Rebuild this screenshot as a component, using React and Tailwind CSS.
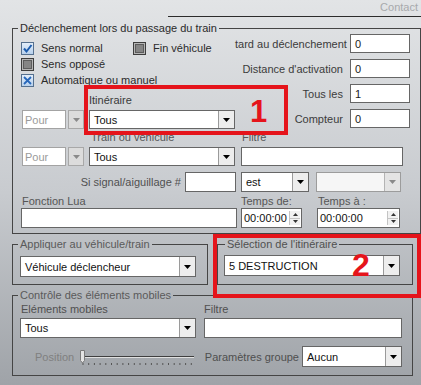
import { useState } from 'react';

function Tri({ color = '#000' }) {
  return (
    <svg width="7" height="4" viewBox="0 0 7 4">
      <polygon points="0,0 7,0 3.5,4" fill={color} />
    </svg>
  );
}

function Checkbox({ state }) {
  if (state === 'off') {
    return (
      <span className="flex h-[13px] w-[13px] shrink-0 items-center justify-center border border-[#3d3d3d] bg-[#b5b5b5]">
        <span className="h-[9px] w-[9px] border border-[#5c5c5c] bg-[#858585]" />
      </span>
    );
  }
  return (
    <span className="flex h-[13px] w-[13px] shrink-0 items-center justify-center border border-[#55708f] bg-gradient-to-b from-[#e3eefa] to-[#b7d0ec]">
      <svg width="11" height="11" viewBox="0 0 11 11">
        {state === 'check' ? (
          <path d="M2 5.5 L4.5 8.5 L9.5 2" fill="none" stroke="#1d5cad" strokeWidth="2" />
        ) : (
          <path d="M2 2 L9 9 M9 2 L2 9" fill="none" stroke="#2767bb" strokeWidth="1.8" />
        )}
      </svg>
    </span>
  );
}

function CheckItem({ state, label }) {
  return (
    <span className="flex items-center gap-[7px]">
      <Checkbox state={state} />
      <span className="text-[#2b2b2b]">{label}</span>
    </span>
  );
}

function Field({ value, className }) {
  return (
    <div className={`flex items-center border border-[#666] bg-white pl-[4px] text-[#1a1a1a] ${className}`}>
      {value}
    </div>
  );
}

function Combo({ value, className, disabled }) {
  return (
    <div className={`flex border ${disabled ? 'border-[#9c9c9c] bg-[#f6f6f6]' : 'border-[#666] bg-white'} ${className}`}>
      <div className="flex flex-1 items-center overflow-hidden whitespace-nowrap pl-[4px] text-[#111]">{value}</div>
      <div
        className={`flex w-[16px] items-center justify-center border-l ${
          disabled ? 'border-[#b4b4b4] bg-[#e4e4e4]' : 'border-[#9a9a9a] bg-[#ededed]'
        }`}
      >
        <Tri color={disabled ? '#8a8a8a' : '#000'} />
      </div>
    </div>
  );
}

function PourCombo() {
  return (
    <div className="flex h-full">
      <div className="ml-[1px] flex w-[44px] items-center border border-[#a3a3a3] bg-white pl-[2px] text-[#9a9a9a]">Pour</div>
      <div className="ml-[2px] flex w-[16px] items-center justify-center border border-[#a8a8a8] bg-[#dcdcdc]">
        <Tri color="#8a8a8a" />
      </div>
    </div>
  );
}

function Spin({ value, className }) {
  return (
    <div className={`flex border border-[#666] bg-white ${className}`}>
      <div className="flex flex-1 items-center pl-[2px] text-[#111]">{value}</div>
      <div className="my-[2px] mr-[1px] flex w-[11px] flex-col border-l border-[#c4c4c4] bg-[#f1f1f1]">
        <div className="flex flex-1 items-center justify-center border-b border-[#c4c4c4]">
          <svg width="5" height="3" viewBox="0 0 5 3"><polygon points="0,3 5,3 2.5,0" fill="#333" /></svg>
        </div>
        <div className="flex flex-1 items-center justify-center">
          <svg width="5" height="3" viewBox="0 0 5 3"><polygon points="0,0 5,0 2.5,3" fill="#333" /></svg>
        </div>
      </div>
    </div>
  );
}

function Slider() {
  const ticks = Array.from({ length: 20 }, (_, i) => 3 + i * 5.7);
  return (
    <svg width="118" height="21" viewBox="0 0 118 21">
      <line x1="2" y1="10.5" x2="114" y2="10.5" stroke="#3f3f3f" strokeWidth="1" />
      <line x1="2" y1="11.5" x2="114" y2="11.5" stroke="#e0e0e0" strokeWidth="1" />
      {ticks.map((x) => (
        <line key={x} x1={x} y1="17" x2={x} y2="19" stroke="#555" strokeWidth="1" />
      ))}
      <path d="M0.5 4.5 H4.5 V14.5 L2.5 17 L0.5 14.5 Z" fill="#e4e4e4" stroke="#7a7a7a" strokeWidth="1" />
    </svg>
  );
}

export default function App() {
  const [tab] = useState('contact');

  return (
    <div
      className="relative h-[385px] w-[421px] overflow-hidden bg-gradient-to-b from-[#e2e4e6] via-[#c8cbcf] to-[#9fa3a8] text-[11px] leading-[14px] text-[#2f2f2f]"
      style={{ fontFamily: '"Liberation Sans", Arial, sans-serif' }}
    >
      <div className="ml-[168px] flex h-[17px] justify-end border-b border-[#2c2c2c] pr-[3px]">
        <span className="text-[#a7a9ac]">{tab === 'contact' ? 'Contact' : ''}</span>
      </div>

      {/* Déclenchement */}
      <fieldset className="ml-[12px] mt-[4px] h-[213px] w-[401px] border border-[#454545]">
        <legend className="ml-[5px] px-[2px] leading-[14px] text-[#2a2a2a]">Déclenchement lors du passage du train</legend>

        <div className="flex h-[94px]">
          <div className="ml-[8px] flex w-[214px] flex-col">
            <div className="mt-[5px] flex h-[16px] items-center">
              <div className="w-[112px]">
                <CheckItem state="check" label="Sens normal" />
              </div>
              <CheckItem state="off" label="Fin véhicule" />
            </div>
            <div className="flex h-[16px] items-center">
              <CheckItem state="off" label="Sens opposé" />
            </div>
            <div className="flex h-[16px] items-center">
              <CheckItem state="x" label="Automatique ou manuel" />
            </div>
            <div className="ml-[68px] mt-[5px] h-[14px] text-[#3a3a3a]">Itinéraire</div>
            <div className="mt-[3px] flex h-[19px]">
              <PourCombo />
              <Combo value="Tous" className="ml-[5px] w-[146px]" />
            </div>
          </div>

          <div className="-mt-[1px] flex flex-1 flex-col items-end gap-[6px] pr-[10px]">
            {[
              ['tard au déclenchement', '0', 'mr-[3px]'],
              ["Distance d'activation", '0', 'mr-[7px]'],
              ['Tous les', '1', 'mr-[7px]'],
              ['Compteur', '0', 'mr-[7px]'],
            ].map(([label, value, gap]) => (
              <div key={label} className="flex h-[19px] items-center whitespace-nowrap">
                <span className={`text-[#3b3b3b] ${gap}`}>{label}</span>
                <Field value={value} className="h-[19px] w-[60px]" />
              </div>
            ))}
          </div>
        </div>

        <div className="mt-[1px] flex h-[14px] text-[#555]">
          <span className="ml-[78px] w-[151px]">Train ou véhicule</span>
          <span>Filtre</span>
        </div>
        <div className="ml-[8px] mt-[3px] flex h-[19px]">
          <PourCombo />
          <Combo value="Tous" className="ml-[5px] w-[146px]" />
          <Field value="" className="ml-[6px] w-[162px]" />
        </div>

        <div className="mt-[6px] flex h-[20px] items-stretch">
          <span className="flex w-[168px] items-center justify-end text-[#505050]">Si signal/aiguillage #</span>
          <Field value="" className="ml-[4px] w-[51px]" />
          <Combo value="est" className="ml-[5px] w-[68px]" />
          <Combo value="" disabled className="ml-[7px] w-[85px]" />
        </div>

        <div className="mt-[2px] flex h-[14px] text-[#555]">
          <span className="ml-[9px] w-[219px]">Fonction Lua</span>
          <span className="w-[77px]">Temps de:</span>
          <span>Temps à :</span>
        </div>
        <div className="flex h-[20px]">
          <Field value="" className="ml-[8px] w-[216px]" />
          <Spin value="00:00:00" className="ml-[4px] w-[61px]" />
          <Spin value="00:00:00" className="ml-[15px] w-[83px]" />
        </div>
      </fieldset>

      <div className="mt-[3px] flex">
        <fieldset className="ml-[12px] h-[48px] w-[196px] border border-[#454545]">
          <legend className="ml-[5px] px-[2px] leading-[14px] text-[#5a5a5a]">Appliquer au véhicule/train</legend>
          <Combo value="Véhicule déclencheur" className="ml-[7px] mt-[5px] h-[21px] w-[176px]" />
        </fieldset>
        <fieldset className="ml-[9px] h-[48px] w-[196px] border border-[#454545]">
          <legend className="ml-[7px] px-[2px] leading-[14px] text-[#505050]">Sélection de l'itinéraire</legend>
          <Combo value="5 DESTRUCTION" className="ml-[6px] mt-[4px] h-[21px] w-[176px]" />
        </fieldset>
      </div>

      <fieldset className="ml-[12px] mt-[3px] h-[88px] w-[401px] border border-[#454545]">
        <legend className="ml-[5px] px-[2px] leading-[14px] text-[#5a5a5a]">Contrôle des éléments mobiles</legend>
        <div className="flex h-[14px] text-[#505050]">
          <span className="ml-[8px] w-[183px]">Eléments mobiles</span>
          <span>Filtre</span>
        </div>
        <div className="mt-[2px] flex h-[20px]">
          <Combo value="Tous" className="ml-[7px] w-[176px]" />
          <Field value="" className="ml-[8px] w-[198px]" />
        </div>
        <div className="mt-[8px] flex h-[21px] items-center whitespace-nowrap">
          <span className="ml-[22px] w-[45px] text-[#808080]">Position</span>
          <Slider />
          <span className="w-[101px] text-right text-[#4f4f4f]">Paramètres groupe</span>
          <Combo value="Aucun" className="ml-[3px] h-[21px] w-[100px]" />
        </div>
      </fieldset>

      {/* annotations */}
      <div className="absolute left-[84px] top-[85px] h-[50px] w-[204px] border-4 border-[#e5141b]" />
      <span className="absolute left-[250px] top-[96px] text-[31px] font-bold leading-none text-[#e5141b]">1</span>
      <div className="absolute left-[213px] top-[234px] h-[64px] w-[208px] border-4 border-[#e5141b]" />
      <span className="absolute left-[352px] top-[249px] text-[32px] font-bold leading-none text-[#e5141b]">2</span>
    </div>
  );
}
